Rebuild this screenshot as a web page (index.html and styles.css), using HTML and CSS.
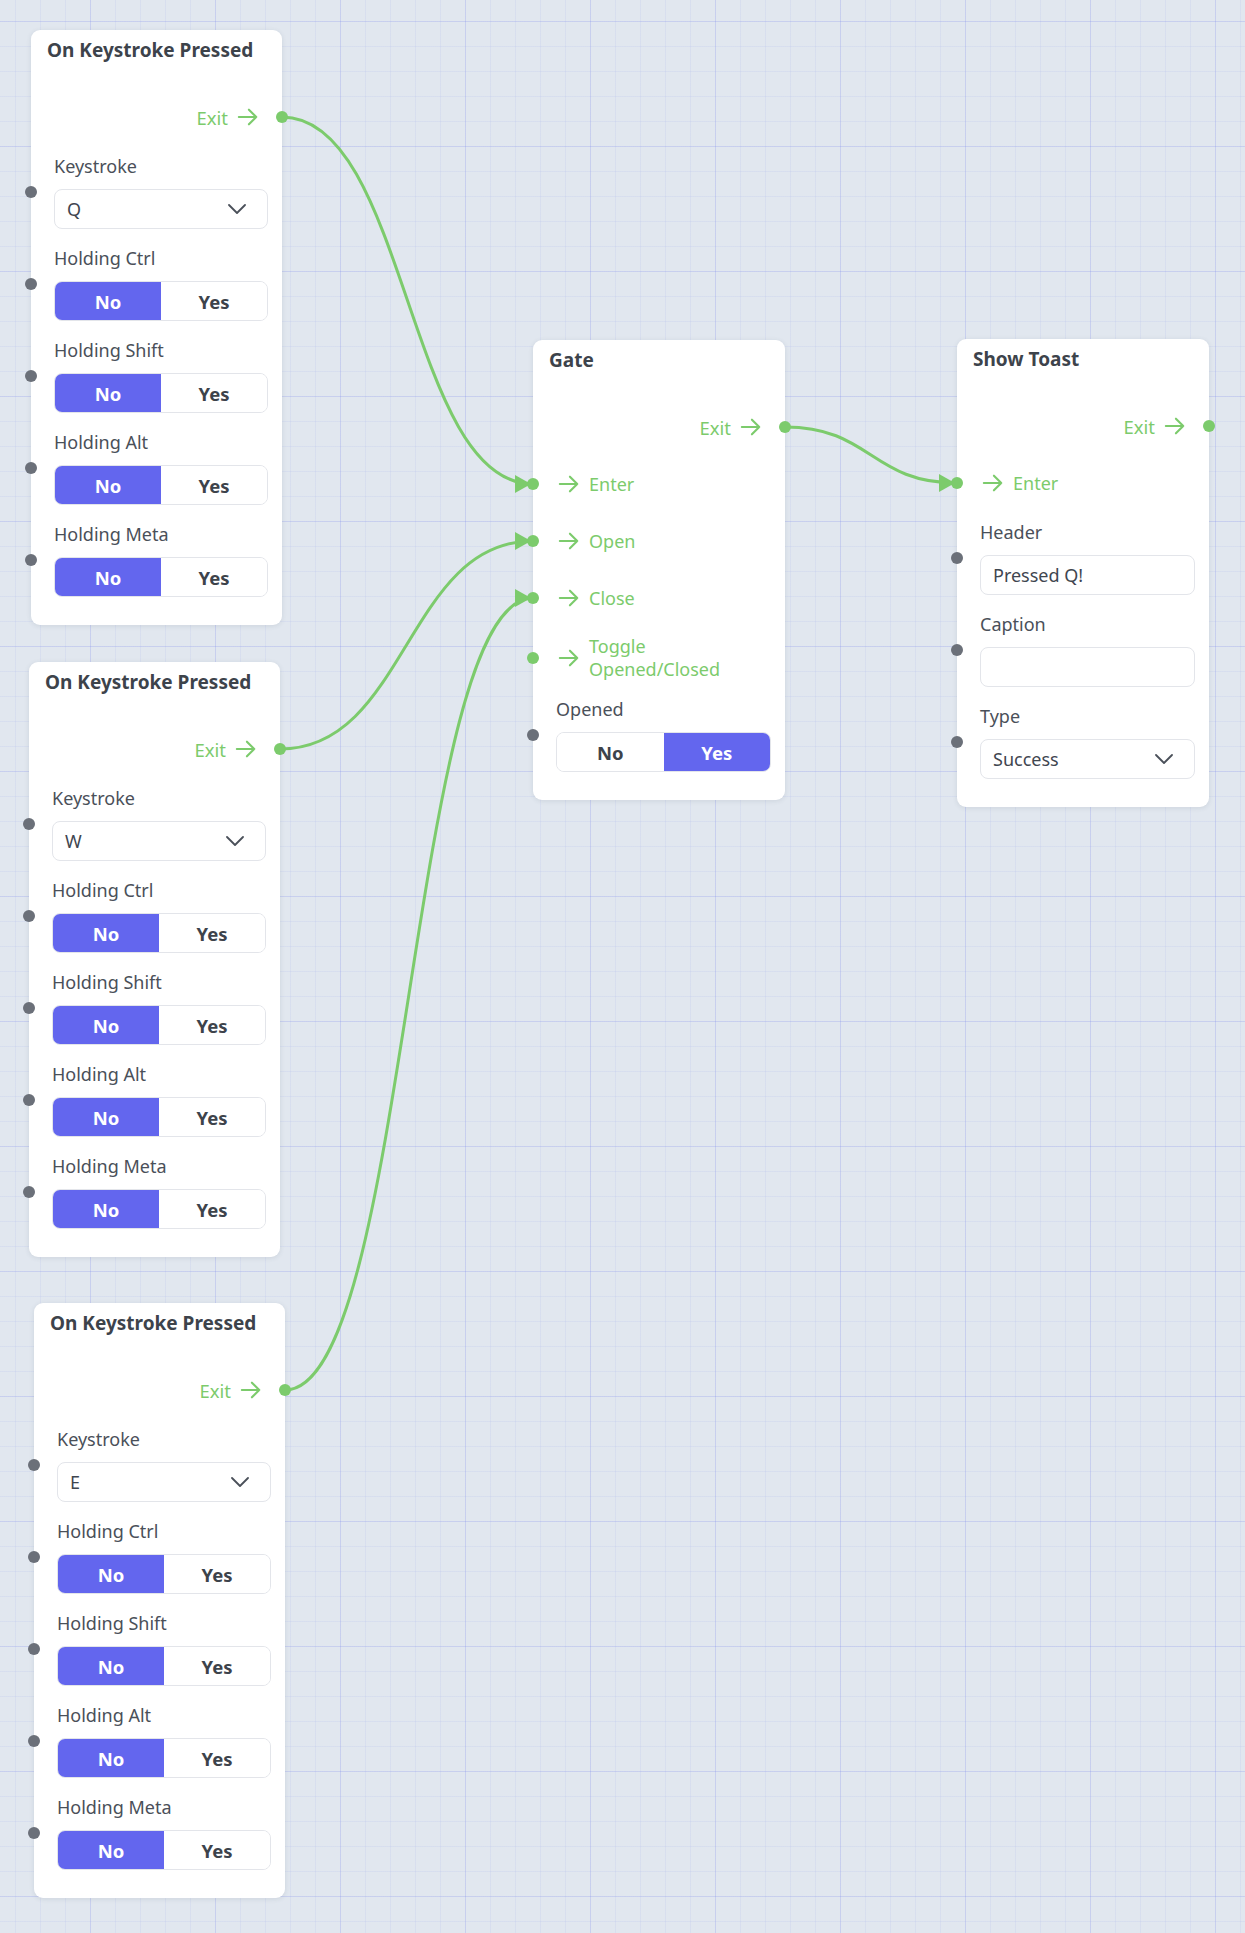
FILE: index.html
```html
<!DOCTYPE html>
<html lang="en">
<head>
<meta charset="utf-8">
<title>Node editor</title>
<link rel="stylesheet" href="styles.css">
</head>
<body>
<div class="canvas">
  <svg class="wires" width="1245" height="1933" viewBox="0 0 1245 1933">
    <g class="wire">
      <path d="M282,117 C407.5,117 407.5,484 533,484"/>
      <path d="M280,749 C406.5,749 406.5,541 533,541"/>
      <path d="M285,1390 C409,1390 409,598 533,598"/>
      <path d="M785,427 C871,427 871,483 957,483"/>
    </g>
    <g class="heads">
      <polygon points="515,475 531,484 515,493"/>
      <polygon points="515,532 531,541 515,550"/>
      <polygon points="515,589 531,598 515,607"/>
      <polygon points="939,474 955,483 939,492"/>
    </g>
  </svg>

  <!-- Node 1 -->
  <div class="node key n1">
    <div class="node-title">On Keystroke Pressed</div>
    <div class="outputs">
      <div class="out-row"><span>Exit</span><svg class="arr" viewBox="0 0 24 24"><path d="M2 12h19M13 4l8 8-8 8"/></svg><i class="port green"></i></div>
    </div>
    <div class="inputs">
      <div class="field"><i class="port"></i><div class="label">Keystroke</div><div class="select"><span>Q</span><svg class="chev" viewBox="0 0 18 10"><path d="M1 1l8 8 8-8"/></svg></div></div>
      <div class="field"><i class="port"></i><div class="label">Holding Ctrl</div><div class="toggle"><span class="on">No</span><span>Yes</span></div></div>
      <div class="field"><i class="port"></i><div class="label">Holding Shift</div><div class="toggle"><span class="on">No</span><span>Yes</span></div></div>
      <div class="field"><i class="port"></i><div class="label">Holding Alt</div><div class="toggle"><span class="on">No</span><span>Yes</span></div></div>
      <div class="field"><i class="port"></i><div class="label">Holding Meta</div><div class="toggle"><span class="on">No</span><span>Yes</span></div></div>
    </div>
  </div>

  <!-- Node 2 -->
  <div class="node key n2">
    <div class="node-title">On Keystroke Pressed</div>
    <div class="outputs">
      <div class="out-row"><span>Exit</span><svg class="arr" viewBox="0 0 24 24"><path d="M2 12h19M13 4l8 8-8 8"/></svg><i class="port green"></i></div>
    </div>
    <div class="inputs">
      <div class="field"><i class="port"></i><div class="label">Keystroke</div><div class="select"><span>W</span><svg class="chev" viewBox="0 0 18 10"><path d="M1 1l8 8 8-8"/></svg></div></div>
      <div class="field"><i class="port"></i><div class="label">Holding Ctrl</div><div class="toggle"><span class="on">No</span><span>Yes</span></div></div>
      <div class="field"><i class="port"></i><div class="label">Holding Shift</div><div class="toggle"><span class="on">No</span><span>Yes</span></div></div>
      <div class="field"><i class="port"></i><div class="label">Holding Alt</div><div class="toggle"><span class="on">No</span><span>Yes</span></div></div>
      <div class="field"><i class="port"></i><div class="label">Holding Meta</div><div class="toggle"><span class="on">No</span><span>Yes</span></div></div>
    </div>
  </div>

  <!-- Node 3 -->
  <div class="node key n3">
    <div class="node-title">On Keystroke Pressed</div>
    <div class="outputs">
      <div class="out-row"><span>Exit</span><svg class="arr" viewBox="0 0 24 24"><path d="M2 12h19M13 4l8 8-8 8"/></svg><i class="port green"></i></div>
    </div>
    <div class="inputs">
      <div class="field"><i class="port"></i><div class="label">Keystroke</div><div class="select"><span>E</span><svg class="chev" viewBox="0 0 18 10"><path d="M1 1l8 8 8-8"/></svg></div></div>
      <div class="field"><i class="port"></i><div class="label">Holding Ctrl</div><div class="toggle"><span class="on">No</span><span>Yes</span></div></div>
      <div class="field"><i class="port"></i><div class="label">Holding Shift</div><div class="toggle"><span class="on">No</span><span>Yes</span></div></div>
      <div class="field"><i class="port"></i><div class="label">Holding Alt</div><div class="toggle"><span class="on">No</span><span>Yes</span></div></div>
      <div class="field"><i class="port"></i><div class="label">Holding Meta</div><div class="toggle"><span class="on">No</span><span>Yes</span></div></div>
    </div>
  </div>

  <!-- Gate -->
  <div class="node gate">
    <div class="node-title">Gate</div>
    <div class="outputs">
      <div class="out-row"><span>Exit</span><svg class="arr" viewBox="0 0 24 24"><path d="M2 12h19M13 4l8 8-8 8"/></svg><i class="port green"></i></div>
    </div>
    <div class="inputs">
      <div class="in-row"><i class="port green"></i><svg class="arr" viewBox="0 0 24 24"><path d="M2 12h19M13 4l8 8-8 8"/></svg><span>Enter</span></div>
      <div class="in-row"><i class="port green"></i><svg class="arr" viewBox="0 0 24 24"><path d="M2 12h19M13 4l8 8-8 8"/></svg><span>Open</span></div>
      <div class="in-row"><i class="port green"></i><svg class="arr" viewBox="0 0 24 24"><path d="M2 12h19M13 4l8 8-8 8"/></svg><span>Close</span></div>
      <div class="in-row"><i class="port green"></i><svg class="arr" viewBox="0 0 24 24"><path d="M2 12h19M13 4l8 8-8 8"/></svg><span>Toggle<br>Opened/Closed</span></div>
      <div class="field"><i class="port"></i><div class="label">Opened</div><div class="toggle"><span>No</span><span class="on">Yes</span></div></div>
    </div>
  </div>

  <!-- Show Toast -->
  <div class="node toast">
    <div class="node-title">Show Toast</div>
    <div class="outputs">
      <div class="out-row"><span>Exit</span><svg class="arr" viewBox="0 0 24 24"><path d="M2 12h19M13 4l8 8-8 8"/></svg><i class="port green"></i></div>
    </div>
    <div class="inputs">
      <div class="in-row"><i class="port green"></i><svg class="arr" viewBox="0 0 24 24"><path d="M2 12h19M13 4l8 8-8 8"/></svg><span>Enter</span></div>
      <div class="field"><i class="port"></i><div class="label">Header</div><div class="text-input">Pressed Q!</div></div>
      <div class="field"><i class="port"></i><div class="label">Caption</div><div class="text-input"></div></div>
      <div class="field"><i class="port"></i><div class="label">Type</div><div class="select"><span>Success</span><svg class="chev" viewBox="0 0 18 10"><path d="M1 1l8 8 8-8"/></svg></div></div>
    </div>
  </div>
</div>
</body>
</html>
```

FILE: styles.css
```css
* { box-sizing: border-box; }

html, body {
  margin: 0;
  padding: 0;
}

body {
  font-family: "Noto Sans", "Open Sans", sans-serif;
  color: #3f4650;
}

.canvas {
  position: relative;
  width: 1245px;
  height: 1933px;
  overflow: hidden;
  background-color: #e1e7ef;
  background-image:
    linear-gradient(to right, rgba(110, 120, 235, 0.15) 1px, transparent 1px),
    linear-gradient(to bottom, rgba(110, 120, 235, 0.15) 1px, transparent 1px),
    linear-gradient(to right, rgba(110, 120, 235, 0.08) 1px, transparent 1px),
    linear-gradient(to bottom, rgba(110, 120, 235, 0.08) 1px, transparent 1px);
  background-size: 125px 125px, 125px 125px, 25px 25px, 25px 25px;
  background-position: 90px 0, 0 21px, 15px 0, 0 21px;
}

.wires {
  position: absolute;
  left: 0;
  top: 0;
  z-index: 0;
}

.wire path {
  fill: none;
  stroke: #7ccb6c;
  stroke-width: 3;
}

.heads polygon {
  fill: #7ccb6c;
}

.node {
  position: absolute;
  z-index: 1;
  width: 252px;
  background: #ffffff;
  border-radius: 9px;
  box-shadow: 0 1px 5px rgba(60, 70, 90, 0.12);
  padding: 8px 0 28px;
  display: flex;
  flex-direction: column;
}

.node.key { width: 251px; }

.n1 { left: 31px; top: 30px; }
.n2 { left: 29px; top: 662px; }
.n3 { left: 34px; top: 1303px; }
.gate { left: 533px; top: 340px; }
.toast { left: 957px; top: 339px; }

.node-title {
  padding: 0 16px;
  height: 24px;
  line-height: 24px;
  font-size: 19px;
  font-weight: 700;
  color: #3d434b;
  white-space: nowrap;
}

.outputs {
  margin-top: 35px;
  display: flex;
  flex-direction: column;
}

.out-row {
  position: relative;
  height: 40px;
  display: flex;
  align-items: center;
  justify-content: flex-end;
  gap: 9px;
  padding-right: 23px;
  color: #7ccb6c;
  font-size: 18.5px;
}

.arr {
  width: 22px;
  height: 22px;
  flex: none;
}

.arr path {
  fill: none;
  stroke: #7ccb6c;
  stroke-width: 2.3;
  stroke-linecap: round;
  stroke-linejoin: round;
}

.inputs {
  margin-top: 17px;
  display: flex;
  flex-direction: column;
  gap: 17px;
}

.in-row {
  position: relative;
  min-height: 40px;
  display: flex;
  align-items: center;
  gap: 9px;
  padding-left: 25px;
  color: #7ccb6c;
  font-size: 18px;
  line-height: 22.5px;
}

.port {
  position: absolute;
  top: 50%;
  width: 12px;
  height: 12px;
  margin-top: -6px;
  border-radius: 50%;
  background: #6b7079;
}

.port.green {
  background: #7ccb6c;
}

.in-row .port,
.field .port {
  left: -6px;
}

.out-row .port {
  right: -6px;
}

.field {
  position: relative;
  padding: 0 14px 0 23px;
  display: flex;
  flex-direction: column;
  gap: 11px;
}

.label {
  font-size: 18px;
  line-height: 24px;
  color: #4a5059;
}

.select,
.text-input {
  height: 40px;
  border: 1px solid #e3e5ea;
  border-radius: 8px;
  display: flex;
  align-items: center;
  padding: 0 21px 0 12px;
  font-size: 18px;
  color: #3f4650;
  background: #fff;
}

.select span {
  flex: 1;
}

.chev {
  width: 18px;
  height: 10px;
  flex: none;
}

.chev path {
  fill: none;
  stroke: #4a5059;
  stroke-width: 1.8;
  stroke-linecap: round;
  stroke-linejoin: round;
}

.toggle {
  height: 40px;
  display: flex;
  border: 1px solid #e3e5ea;
  border-radius: 8px;
  overflow: hidden;
}

.toggle span {
  flex: 1;
  display: flex;
  align-items: center;
  justify-content: center;
  font-size: 18.5px;
  font-weight: 700;
  color: #3d434b;
  background: #fff;
}

.toggle span.on {
  background: #6366ee;
  color: #ffffff;
}
```
